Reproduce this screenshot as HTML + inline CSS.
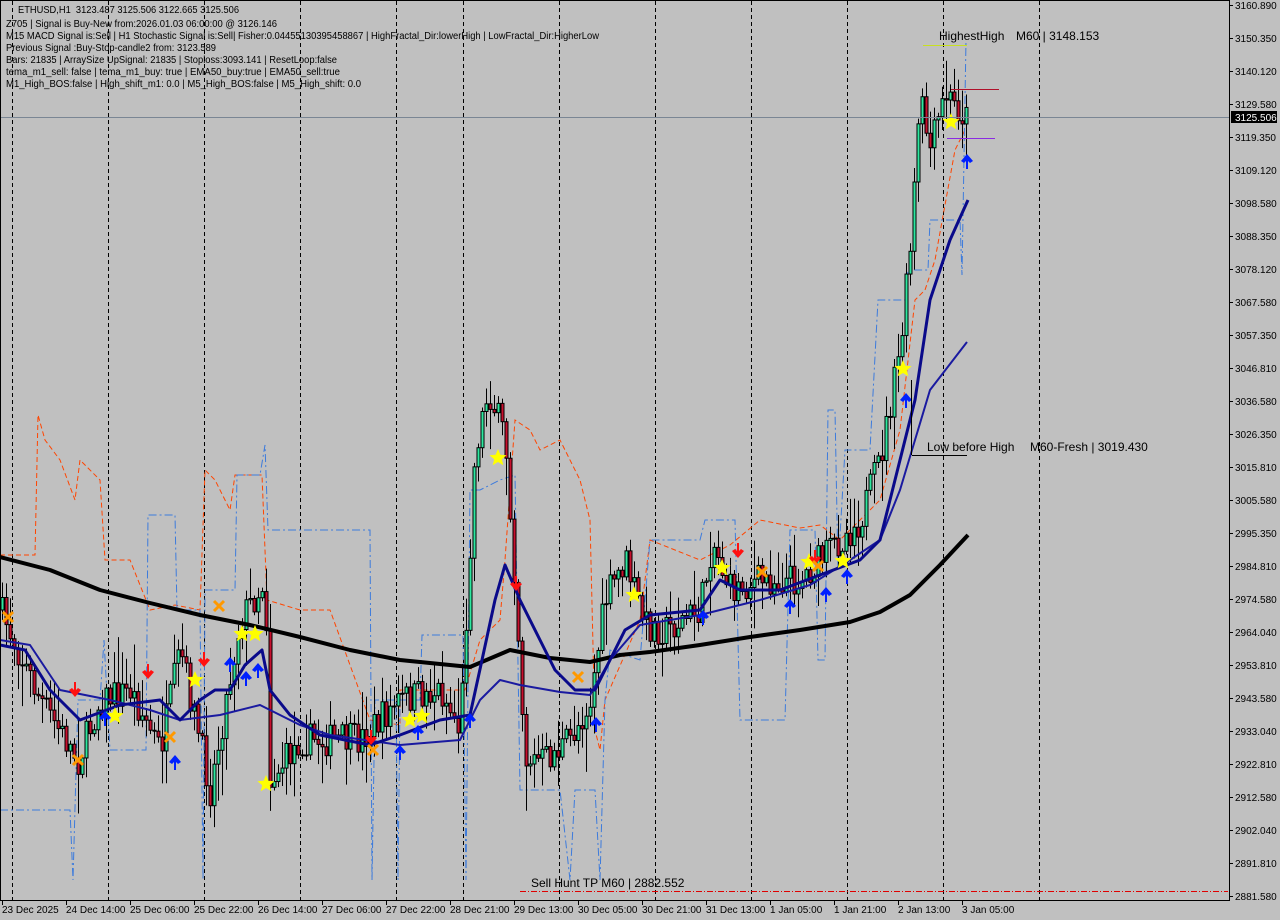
<!DOCTYPE html>
<html><head><meta charset="utf-8"><style>
html,body{margin:0;padding:0;background:#c0c0c0;width:1280px;height:920px;overflow:hidden}
svg{display:block}
text{font-family:"Liberation Sans",sans-serif;white-space:pre}
</style></head><body>
<svg id="s" width="1280" height="920" xmlns="http://www.w3.org/2000/svg">
<rect width="1280" height="920" fill="#c0c0c0"/>
<g id="grid" stroke="#000" stroke-width="1" stroke-dasharray="4,3"></g>
<g id="dash"></g>
<g id="cand"></g>
<g id="lines" fill="none" stroke-linejoin="round"></g>
<g id="marks"></g>
<line x1="0" y1="117.5" x2="1229" y2="117.5" stroke="#7a8694"/>
<line x1="520" y1="891.5" x2="1228" y2="891.5" stroke="#e00000" stroke-dasharray="6,2,1,2"/>
<line x1="923" y1="45.5" x2="967" y2="45.5" stroke="#c8e020"/>
<line x1="951" y1="89.5" x2="999" y2="89.5" stroke="#b0102a"/>
<line x1="947" y1="138.5" x2="995" y2="138.5" stroke="#8a2be2"/>
<line x1="912" y1="455.5" x2="967" y2="455.5" stroke="#000"/>
<line x1="911.5" y1="380" x2="911.5" y2="455" stroke="#000"/>
<g font-size="12" fill="#000">
<text x="939" y="40">HighestHigh</text><text x="1016" y="40">M60 | 3148.153</text>
<text x="927" y="451">Low before High</text><text x="1030" y="451">M60-Fresh | 3019.430</text>
<text x="531" y="887">Sell Hunt TP M60 | 2882.552</text>
</g>
<g font-size="10" fill="#000">
<text x="18" y="13" textLength="221" lengthAdjust="spacingAndGlyphs">ETHUSD,H1  3123.487 3125.506 3122.665 3125.506</text>
<text x="6" y="27" textLength="271" lengthAdjust="spacingAndGlyphs">Z705 | Signal is Buy-New from:2026.01.03 06:00:00 @ 3126.146</text>
<text x="6" y="39" textLength="593" lengthAdjust="spacingAndGlyphs">M15 MACD Signal is:Sell | H1 Stochastic Signal is:Sell| Fisher:0.04455130395458867 | HighFractal_Dir:lowerHigh | LowFractal_Dir:HigherLow</text>
<text x="6" y="51" textLength="210" lengthAdjust="spacingAndGlyphs">Previous Signal :Buy-Stop-candle2 from: 3123.589</text>
<text x="6" y="63" textLength="331" lengthAdjust="spacingAndGlyphs">Bars: 21835 | ArraySize UpSignal: 21835 | Stoploss:3093.141 | ResetLoop:false</text>
<text x="6" y="75" textLength="334" lengthAdjust="spacingAndGlyphs">tema_m1_sell: false | tema_m1_buy: true | EMA50_buy:true | EMA50_sell:true</text>
<text x="6" y="87" textLength="355" lengthAdjust="spacingAndGlyphs">M1_High_BOS:false | High_shift_m1: 0.0 | M5_High_BOS:false | M5_High_shift: 0.0</text>
</g>
<line x1="1229.5" y1="0" x2="1229.5" y2="901" stroke="#000"/>
<line x1="0" y1="900.5" x2="1230" y2="900.5" stroke="#000"/>
<line x1="0.5" y1="0" x2="0.5" y2="901" stroke="#000"/>
<line x1="0" y1="0.5" x2="1230" y2="0.5" stroke="#000"/>
<g id="axis" font-size="10" fill="#000"></g>
<rect x="1231" y="111" width="46" height="12" fill="#000"/>
<text x="1235" y="121" font-size="10" fill="#fff">3125.506</text>
</svg>
<script>
(function(){
var NS="http://www.w3.org/2000/svg";
function el(p,t,a){var e=document.createElementNS(NS,t);for(var k in a)e.setAttribute(k,a[k]);document.getElementById(p).appendChild(e);return e;}
[12,108,204,300,396,463,559,655,751,847,943,1039].forEach(function(x){el("grid","line",{x1:x+.5,y1:1,x2:x+.5,y2:900});});
var labs=["3160.890","3150.350","3140.120","3129.580","3119.350","3109.120","3098.580","3088.350","3078.120","3067.580","3057.350","3046.810","3036.580","3026.350","3015.810","3005.580","2995.350","2984.810","2974.580","2964.040","2953.810","2943.580","2933.040","2922.810","2912.580","2902.040","2891.810","2881.580"];
labs.forEach(function(l,i){var y=5+i*33;el("axis","line",{x1:1229,y1:y+.5,x2:1233,y2:y+.5,stroke:"#000"});var t=el("axis","text",{x:1235,y:y+4});t.textContent=l;});
var dl=[["23 Dec 2025",2],["24 Dec 14:00",66],["25 Dec 06:00",130],["25 Dec 22:00",194],["26 Dec 14:00",258],["27 Dec 06:00",322],["27 Dec 22:00",386],["28 Dec 21:00",450],["29 Dec 13:00",514],["30 Dec 05:00",578],["30 Dec 21:00",642],["31 Dec 13:00",706],["1 Jan 05:00",770],["1 Jan 21:00",834],["2 Jan 13:00",898],["3 Jan 05:00",962]];
dl.forEach(function(d){el("axis","line",{x1:d[1]+.5,y1:900,x2:d[1]+.5,y2:905,stroke:"#000"});var t=el("axis","text",{x:d[1],y:913});t.textContent=d[0];});
function interp(P,x){for(var i=0;i<P.length-1;i++){if(x<=P[i+1][0]){var a=P[i],b=P[i+1];return a[1]+(b[1]-a[1])*(x-a[0])/(b[0]-a[0]);}}return P[P.length-1][1];}
function pl(P){return P.map(function(p){return p.join(",")}).join(" ");}
var seed=7;function rnd(){seed=(seed*16807)%2147483647;return seed/2147483647;}
el("dash","polyline",{points:pl([[0,555],[35,555],[38,415],[45,440],[60,460],[75,500],[80,460],[100,480],[105,560],[130,560],[150,610],[175,605],[200,610],[205,470],[215,480],[230,510],[235,475],[262,475],[267,600],[300,610],[330,610],[370,720],[400,725],[400,690],[465,690],[480,640],[500,620],[505,560],[515,420],[530,430],[540,450],[560,440],[580,480],[590,520],[595,730],[600,750],[605,700],[640,620],[650,540],[700,560],[730,545],[760,520],[800,528],[820,525],[840,540],[860,520],[880,500],[900,430],[915,300],[925,290],[935,260],[955,150],[965,130]]),fill:"none",stroke:"#ff4500","stroke-dasharray":"5,3"});
el("dash","polyline",{points:pl([[0,810],[70,810],[73,880],[78,700],[100,700],[104,640],[110,750],[146,750],[148,515],[175,515],[177,610],[200,610],[203,880],[205,590],[235,590],[237,475],[260,475],[265,445],[268,530],[370,530],[372,880],[375,700],[396,700],[398,880],[400,700],[420,700],[422,635],[463,635],[466,880],[470,490],[480,490],[500,480],[515,475],[520,790],[560,790],[570,880],[575,790],[595,790],[600,880],[605,700],[610,650],[640,660],[650,540],[700,540],[705,520],[735,520],[740,720],[785,720],[790,530],[815,530],[818,660],[825,660],[828,410],[835,410],[838,570],[845,450],[870,450],[878,300],[905,300],[908,270],[928,270],[930,220],[960,220],[962,275],[966,40]]),fill:"none",stroke:"#3d7bdc","stroke-dasharray":"8,3,2,3"});
var P=[[0,610],[40,700],[78,760],[100,700],[130,690],[160,750],[180,650],[210,790],[240,620],[265,580],[270,780],[300,740],[360,740],[400,700],[440,690],[460,730],[475,450],[488,390],[505,440],[515,580],[525,760],[545,760],[570,740],[590,700],[605,600],[625,560],[645,625],[665,630],[700,610],[712,540],[730,590],[760,580],[800,580],[840,540],[860,520],[880,460],[900,350],[910,250],[920,100],[930,150],[945,95],[968,120]];
var prev=610;
for(var x=2;x<=968;x+=4){
 var c=interp(P,x)+(rnd()-.5)*34;var o=prev;prev=c;
 var tp=Math.min(o,c),bt=Math.max(o,c);
 var hi=tp-rnd()*rnd()*45-3,lo=bt+rnd()*rnd()*45+3;
 el("cand","line",{x1:x+.5,y1:hi,x2:x+.5,y2:lo,stroke:"#000"});
 el("cand","rect",{x:x-1,y:tp,width:3,height:Math.max(1,bt-tp),fill:c<o?"#2ee8a0":"#c8102e",stroke:"#000","stroke-width":1});
}
el("lines","polyline",{points:pl([[0,557],[50,570],[100,590],[150,603],[200,615],[250,625],[300,637],[350,650],[400,660],[470,667],[510,650],[550,658],[590,662],[620,655],[650,652],[700,645],[750,637],[800,630],[850,622],[880,612],[910,595],[940,565],[968,535]]),stroke:"#000","stroke-width":4});
el("lines","polyline",{points:pl([[0,640],[30,645],[60,690],[110,700],[150,710],[180,720],[220,715],[260,705],[300,725],[330,735],[400,745],[460,740],[480,700],[500,680],[520,685],[560,692],[590,695],[610,660],[640,625],[700,615],[760,600],[810,585],[850,560],[880,540],[900,490],[915,440],[930,390],[967,342]]),stroke:"#1a1aa0","stroke-width":2});
el("lines","polyline",{points:pl([[0,645],[25,650],[50,690],[80,720],[120,705],[160,700],[180,720],[200,700],[215,690],[230,690],[245,665],[262,650],[270,690],[290,715],[320,735],[370,745],[400,735],[440,720],[470,715],[482,660],[495,600],[505,565],[520,600],[540,640],[555,670],[575,690],[595,690],[610,660],[625,630],[650,615],[700,610],[720,580],[740,590],[780,590],[820,575],[860,560],[880,540],[900,460],[915,400],[930,300],[950,240],[968,200]]),stroke:"#0a0a8a","stroke-width":3});
function star(x,y){var s="";for(var i=0;i<10;i++){var r=i%2?4:9,a=-Math.PI/2+i*Math.PI/5;s+=(x+r*Math.cos(a)).toFixed(1)+","+(y+r*Math.sin(a)).toFixed(1)+" ";}el("marks","polygon",{points:s,fill:"#ffff00"});}
function arrow(x,y,up,col){var d=up?"M"+x+","+(y-7)+" l-6,7 l3,2 l2,-2 v8 h2 v-8 l2,2 l3,-2z":"M"+x+","+(y+7)+" l-6,-7 l3,-2 l2,2 v-8 h2 v8 l2,-2 l3,2z";el("marks","path",{d:d,fill:col});}
function cross(x,y){el("marks","path",{d:"M"+(x-5)+","+(y-5)+"L"+(x+5)+","+(y+5)+"M"+(x+5)+","+(y-5)+"L"+(x-5)+","+(y+5),stroke:"#ff9900","stroke-width":3});}
[[115,716],[195,680],[242,634],[255,634],[266,784],[410,720],[422,716],[498,458],[634,595],[722,568],[809,562],[843,561],[903,369],[951,122]].forEach(function(p){star(p[0],p[1]);});
[[105,718],[175,762],[230,664],[246,678],[258,670],[400,752],[418,732],[470,720],[596,724],[703,617],[790,606],[826,594],[847,576],[906,400],[967,161]].forEach(function(p){arrow(p[0],p[1],true,"#0020ff");});
[[75,690],[148,672],[204,660],[371,738],[516,584],[738,551],[815,558]].forEach(function(p){arrow(p[0],p[1],false,"#ff1010");});
[[8,617],[78,760],[170,737],[219,606],[373,750],[578,677],[762,572],[818,566]].forEach(function(p){cross(p[0],p[1]);});
})();
</script>
</body></html>
